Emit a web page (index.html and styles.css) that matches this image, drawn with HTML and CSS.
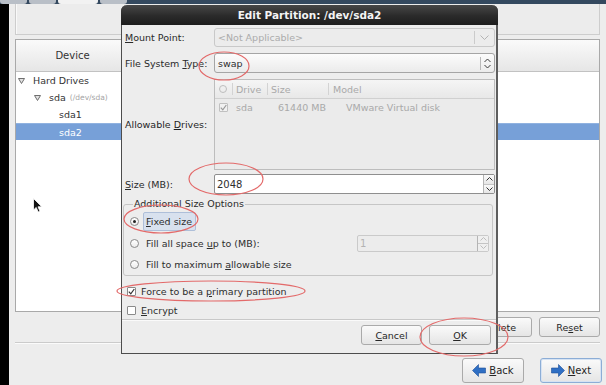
FILE: index.html
```html
<!DOCTYPE html>
<html lang="en">
<head>
    <meta charset="UTF-8">
    <meta name="viewport" content="width=device-width, initial-scale=1.0">
    <link rel="stylesheet" href="styles.css">
    <title>Edit Partition</title>
</head>
<body>
    <div class="tabs">
        <span class="tab"></span>
        <span class="tab"></span>
        <span class="tab active"></span>
        <span class="tab"></span>
    </div>

    <div class="screen">
        <div class="black-edge"></div>

        <div class="installer">
            <div class="top-box"></div>

            <div class="device-tree">
                <div class="tree-header">
                    <span class="col-device">Device</span>
                </div>
                <div class="tree-row level0">
                    <svg class="expander" width="7" height="6" viewBox="0 0 7 6"><polygon points="0.5,0.5 6.5,0.5 3.5,5.5" fill="#e2e2e2" stroke="#6f6f6f"/></svg>
                    Hard Drives
                </div>
                <div class="tree-row level1">
                    <svg class="expander" width="7" height="6" viewBox="0 0 7 6"><polygon points="0.5,0.5 6.5,0.5 3.5,5.5" fill="#e2e2e2" stroke="#6f6f6f"/></svg>
                    sda <span class="dev-path">(/dev/sda)</span>
                </div>
                <div class="tree-row level2">sda1</div>
                <div class="tree-row level2 selected">sda2</div>
            </div>

            <div class="action-row">
                <button class="btn btn-delete">Delete</button>
                <button class="btn btn-reset">Re<u>s</u>et</button>
            </div>

            <div class="separator"></div>

            <div class="nav-row">
                <button class="btn btn-nav">
                    <svg width="14" height="13" viewBox="0 0 14 13"><polygon points="0.5,6.5 6.5,0.5 6.5,4 13.5,4 13.5,9 6.5,9 6.5,12.5" fill="#2f6fc4" stroke="#1d4f97" stroke-width="0.6"/></svg>
                    <span><u>B</u>ack</span>
                </button>
                <button class="btn btn-nav default">
                    <svg width="14" height="13" viewBox="0 0 14 13"><polygon points="13.5,6.5 7.5,0.5 7.5,4 0.5,4 0.5,9 7.5,9 7.5,12.5" fill="#2f6fc4" stroke="#1d4f97" stroke-width="0.6"/></svg>
                    <span><u>N</u>ext</span>
                </button>
            </div>
        </div>
    </div>

    <div class="dialog">
        <div class="dialog-title">Edit Partition: /dev/sda2</div>

        <div class="dialog-body">
            <div class="form-row row-mount">
                <span class="form-label"><u>M</u>ount Point:</span>
                <div class="combo disabled">
                    <span class="combo-text">&lt;Not Applicable&gt;</span>
                    <span class="combo-button">
                        <svg width="9" height="5" viewBox="0 0 9 5"><polyline points="0.5,0.5 4.5,4.5 8.5,0.5" fill="none" stroke="#b4b4b4"/></svg>
                    </span>
                </div>
            </div>

            <div class="form-row row-fs">
                <span class="form-label">File System <u>T</u>ype:</span>
                <div class="combo">
                    <span class="combo-text">swap</span>
                    <span class="combo-button narrow">
                        <svg width="7" height="11" viewBox="0 0 7 11"><polyline points="0.5,4 3.5,1 6.5,4" fill="none" stroke="#3a3a3a"/><polyline points="0.5,7 3.5,10 6.5,7" fill="none" stroke="#3a3a3a"/></svg>
                    </span>
                </div>
            </div>

            <div class="form-row row-drives">
                <span class="form-label">Allowable <u>D</u>rives:</span>
                <div class="drive-list">
                    <div class="drive-header">
                        <span class="dh-cell dh-check"><span class="ring"></span></span>
                        <span class="dh-cell">Drive</span>
                        <span class="dh-cell">Size</span>
                        <span class="dh-cell dh-model">Model</span>
                    </div>
                    <div class="drive-row">
                        <span class="check small disabled">
                            <svg width="7" height="7" viewBox="0 0 7 7"><polyline points="0.8,3.6 2.8,5.8 6.3,1" fill="none" stroke="#9a9a9a" stroke-width="1.2"/></svg>
                        </span>
                        <span>sda</span>
                        <span>61440 MB</span>
                        <span>VMware Virtual disk</span>
                    </div>
                </div>
            </div>

            <div class="form-row row-size">
                <span class="form-label"><u>S</u>ize (MB):</span>
                <div class="spin">
                    <span class="spin-text">2048</span>
                    <span class="spin-buttons">
                        <span class="spin-half">
                            <svg width="7" height="4" viewBox="0 0 7 4"><polyline points="0.5,3.5 3.5,0.5 6.5,3.5" fill="none" stroke="#333"/></svg>
                        </span>
                        <span class="spin-half">
                            <svg width="7" height="4" viewBox="0 0 7 4"><polyline points="0.5,0.5 3.5,3.5 6.5,0.5" fill="none" stroke="#333"/></svg>
                        </span>
                    </span>
                </div>
            </div>

            <fieldset class="size-options">
                <legend>Additional Size Options</legend>

                <div class="radio-row">
                    <span class="radio checked"></span>
                    <span class="option-label focused"><u>F</u>ixed size</span>
                </div>
                <div class="radio-row">
                    <span class="radio"></span>
                    <span class="option-label">Fill all space <u>u</u>p to (MB):</span>
                    <div class="spin disabled small-spin">
                        <span class="spin-text">1</span>
                        <span class="spin-buttons">
                            <span class="spin-half">
                                <svg width="7" height="4" viewBox="0 0 7 4"><polyline points="0.5,3.5 3.5,0.5 6.5,3.5" fill="none" stroke="#bdbdbd"/></svg>
                            </span>
                            <span class="spin-half">
                                <svg width="7" height="4" viewBox="0 0 7 4"><polyline points="0.5,0.5 3.5,3.5 6.5,0.5" fill="none" stroke="#bdbdbd"/></svg>
                            </span>
                        </span>
                    </div>
                </div>
                <div class="radio-row">
                    <span class="radio"></span>
                    <span class="option-label">Fill to maximum <u>a</u>llowable size</span>
                </div>
            </fieldset>

            <div class="check-row force-row">
                <span class="check">
                    <svg width="7" height="7" viewBox="0 0 7 7"><polyline points="0.8,3.6 2.8,5.8 6.3,1" fill="none" stroke="#333" stroke-width="1.2"/></svg>
                </span>
                <span>Force to be a <u>p</u>rimary partition</span>
            </div>
            <div class="check-row encrypt-row">
                <span class="check"></span>
                <span><u>E</u>ncrypt</span>
            </div>

            <div class="dialog-separator"></div>

            <div class="dialog-buttons">
                <button class="btn btn-cancel"><u>C</u>ancel</button>
                <button class="btn btn-ok"><u>O</u>K</button>
            </div>
        </div>
    </div>

    <!-- red pen marks drawn over the screenshot -->
    <svg class="annotations" width="606" height="385" viewBox="0 0 606 385">
        <ellipse cx="224" cy="66" rx="25" ry="14"/>
        <ellipse cx="226" cy="179" rx="37" ry="16"/>
        <ellipse cx="161" cy="219" rx="37" ry="14"/>
        <ellipse cx="211" cy="291" rx="94" ry="10"/>
        <ellipse cx="464" cy="337" rx="44" ry="19"/>
    </svg>

    <svg class="cursor" width="10" height="15" viewBox="0 0 10 15">
        <polygon points="0.5,0.5 0.5,12 3.2,9.4 5.2,14 7,13.2 5,8.8 8.8,8.8" fill="#111" stroke="#fff" stroke-width="0.8"/>
    </svg>
</body>
</html>
```

FILE: styles.css
```css
* {
    box-sizing: border-box;
}

body {
    margin: 0;
    width: 606px;
    height: 385px;
    overflow: hidden;
    position: relative;
    background-color: #ededed;
    font-family: "DejaVu Sans", "Liberation Sans", sans-serif;
    font-size: 9.5px;
    color: #2e2e2e;
}

u {
    text-decoration: underline;
    text-underline-offset: 1px;
}

/* top tab strip */
.tabs {
    display: flex;
    height: 4px;
    background-color: #34495f;
}

.tab {
    width: 27px;
    margin-right: 2px;
    background-color: #b9bfc7;
    border-radius: 0 0 3px 3px;
}

.tab.active {
    width: 40px;
    background-color: #f2f2f2;
}

.screen {
    display: flex;
    height: 381px;
}

.black-edge {
    width: 9px;
    background-color: #000;
}

.installer {
    flex: 1;
    display: flex;
    flex-direction: column;
    padding: 0 6px;
}

.top-box {
    height: 31px;
    border: 1px solid #cdcdcd;
    border-top: none;
    background-color: #ececec;
    box-shadow: inset 1px 0 0 #f9f9f9;
}

/* device tree */
.device-tree {
    margin-top: 4px;
    height: 273px;
    border: 1px solid #a9a9a9;
    background-color: #fff;
}

.tree-header {
    height: 32px;
    display: flex;
    align-items: center;
    background: linear-gradient(#fafafa, #e6e6e6);
    border-bottom: 1px solid #c2c2c2;
}

.col-device {
    width: 113px;
    text-align: center;
    font-size: 10px;
    color: #333;
}

.tree-row {
    height: 17px;
    display: flex;
    align-items: center;
    color: #333;
}

.expander {
    margin-right: 8px;
}

.level0 {
    padding-left: 2px;
}

.level1 {
    padding-left: 18px;
}

.level2 {
    padding-left: 43px;
}

.dev-path {
    margin-left: 4px;
    font-size: 7.5px;
    color: #a5a5a5;
}

.tree-row.selected {
    background-color: #77a0d8;
    border-top: 1px solid #90b2e0;
    color: #fff;
}

/* buttons */
.btn {
    display: flex;
    align-items: center;
    justify-content: center;
    padding: 0;
    font-family: inherit;
    font-size: 9.5px;
    color: #262626;
    border: 1px solid #aaaaaa;
    border-radius: 3px;
    background: linear-gradient(#fafafa, #e5e5e5);
}

.action-row {
    display: flex;
    justify-content: flex-end;
    gap: 7px;
    margin-top: 5px;
    height: 20px;
}

.btn-delete {
    width: 63px;
}

.btn-reset {
    width: 61px;
}

.separator {
    margin-top: 5px;
    height: 2px;
    border-top: 1px solid #cbcbcb;
    border-bottom: 1px solid #fbfbfb;
}

.nav-row {
    display: flex;
    justify-content: flex-end;
    gap: 16px;
    margin-top: 14px;
    margin-right: -2px;
    height: 25px;
}

.btn-nav {
    width: 62px;
    gap: 3px;
    font-size: 10px;
}

.btn-nav.default {
    border-color: #8cadd6;
    box-shadow: inset 0 0 0 1px #d6e3f3;
}

/* dialog */
.dialog {
    position: absolute;
    left: 121px;
    top: 5px;
    width: 377px;
    height: 349px;
    background-color: #ededed;
    border: 1px solid #4d4d4d;
    border-top: none;
    border-right: 2px solid #5e5e5e;
    border-radius: 6px 6px 0 0;
}

.dialog-title {
    height: 20px;
    margin: 0 -2px 0 -1px;
    line-height: 20px;
    text-align: center;
    font-weight: bold;
    font-size: 10.5px;
    color: #f4f4f4;
    background: linear-gradient(#474747, #2a2a2a 55%, #1d1d1d);
    border-radius: 6px 6px 0 0;
}

.dialog-body {
    padding: 3px 1px 0 3px;
}

.form-row {
    display: flex;
    align-items: center;
}

.form-label {
    width: 89px;
    color: #2a2a2a;
}

.row-drives .form-label {
    color: #1f1f1f;
}

.row-mount {
    height: 19px;
}

.row-fs {
    margin-top: 6px;
    height: 20px;
}

.row-drives {
    margin-top: 6px;
    height: 91px;
}

.row-size {
    margin-top: 4px;
    height: 20px;
}

.combo {
    flex: 1;
    height: 100%;
    display: flex;
    align-items: center;
    border: 1px solid #a5a5a5;
    border-radius: 3px;
    background: linear-gradient(#fcfcfc, #ebebeb);
}

.combo.disabled {
    border-color: #c9c9c9;
    background: #ececec;
    color: #ababab;
}

.combo-text {
    flex: 1;
    padding-left: 3px;
}

.combo-button {
    width: 20px;
    height: 13px;
    display: flex;
    align-items: center;
    justify-content: center;
    border-left: 1px solid #cbcbcb;
}

.combo-button.narrow {
    width: 14px;
    border-left-color: #b9b9b9;
}

.drive-list {
    flex: 1;
    height: 100%;
    border: 1px solid #bdbdbd;
    background-color: #ebebeb;
    color: #a9a9a9;
}

.drive-header {
    display: grid;
    grid-template-columns: 17px 35px 61px 1fr;
    height: 19px;
    border-bottom: 1px solid #d0d0d0;
    background: linear-gradient(#f5f5f5, #e8e8e8);
}

.dh-cell {
    display: flex;
    align-items: center;
    padding-left: 3px;
    border-left: 1px solid #d3d3d3;
    margin: 3px 0;
}

.dh-check {
    border-left: none;
    padding-left: 4px;
}

.dh-model {
    padding-left: 4px;
}

.ring {
    width: 8px;
    height: 8px;
    border: 1px solid #bdbdbd;
    border-radius: 50%;
}

.drive-row {
    display: grid;
    grid-template-columns: 21px 42px 68px 1fr;
    align-items: center;
    height: 17px;
}

.drive-row .check {
    margin-left: 4px;
}

.spin {
    flex: 1;
    height: 100%;
    display: flex;
    border: 1px solid #8f8f8f;
    border-radius: 2px;
    background-color: #fff;
}

.spin-text {
    flex: 1;
    display: flex;
    align-items: center;
    padding-left: 2px;
    font-size: 10px;
}

.spin-buttons {
    width: 11px;
    display: flex;
    flex-direction: column;
    border-left: 1px solid #b4b4b4;
}

.spin-half {
    flex: 1;
    display: flex;
    align-items: center;
    justify-content: center;
    background: linear-gradient(#fafafa, #e6e6e6);
}

.spin-half + .spin-half {
    border-top: 1px solid #c4c4c4;
}

.spin.disabled {
    border-color: #cacaca;
    background-color: #ececec;
    color: #b3b3b3;
}

.small-spin {
    flex: none;
    width: 132px;
    height: 17px;
    margin-left: auto;
    margin-right: 3px;
}

.small-spin .spin-half {
    background: #efefef;
}

/* size options frame */
.size-options {
    margin: 4px 2px 0 -2px;
    padding: 0 0 0 6px;
    border: 1px solid #c6c6c6;
    border-radius: 3px;
    min-inline-size: 0;
}

.size-options legend {
    padding: 0 1px;
    margin-left: 3px;
    line-height: 12px;
    color: #2a2a2a;
}

.radio-row {
    display: flex;
    align-items: center;
    height: 22px;
}

.radio-row:last-child {
    height: 21px;
}

.radio {
    width: 9px;
    height: 9px;
    margin-right: 4px;
    border: 1px solid #8a8a8a;
    border-radius: 50%;
    background: linear-gradient(#fff, #ececec);
    display: flex;
    align-items: center;
    justify-content: center;
}

.radio.checked::after {
    content: "";
    width: 3px;
    height: 3px;
    border-radius: 50%;
    background-color: #222;
}

.option-label {
    padding: 3px 2px;
    border: 1px solid transparent;
    white-space: nowrap;
}

.option-label.focused {
    padding: 3px 3px 3px 2px;
    height: 19px;
    background-color: #d8e1ee;
    border-color: #aebfd9;
    border-radius: 2px;
}

.check-row {
    display: flex;
    align-items: center;
    padding-left: 2px;
    gap: 5px;
}

.force-row {
    margin-top: 5px;
    height: 20px;
}

.encrypt-row {
    height: 18px;
}

.check {
    width: 9px;
    height: 9px;
    border: 1px solid #8a8a8a;
    border-radius: 1px;
    background-color: #fff;
    display: flex;
    align-items: center;
    justify-content: center;
}

.check.small {
    border-color: #c0c0c0;
    background-color: #f1f1f1;
}

.dialog-separator {
    margin: 0 -1px 0 -3px;
    height: 2px;
    border-top: 1px solid #c8c8c8;
    border-bottom: 1px solid #fafafa;
}

.dialog-buttons {
    display: flex;
    justify-content: flex-end;
    gap: 7px;
    margin-top: 4px;
    padding-right: 4px;
    height: 20px;
}

.btn-cancel {
    width: 61px;
}

.btn-ok {
    width: 62px;
}

/* overlays */
.annotations {
    position: absolute;
    left: 0;
    top: 0;
    pointer-events: none;
}

.annotations ellipse {
    fill: none;
    stroke: #e36a6a;
    stroke-width: 1.2;
}

.cursor {
    position: absolute;
    left: 33px;
    top: 198px;
}
```
